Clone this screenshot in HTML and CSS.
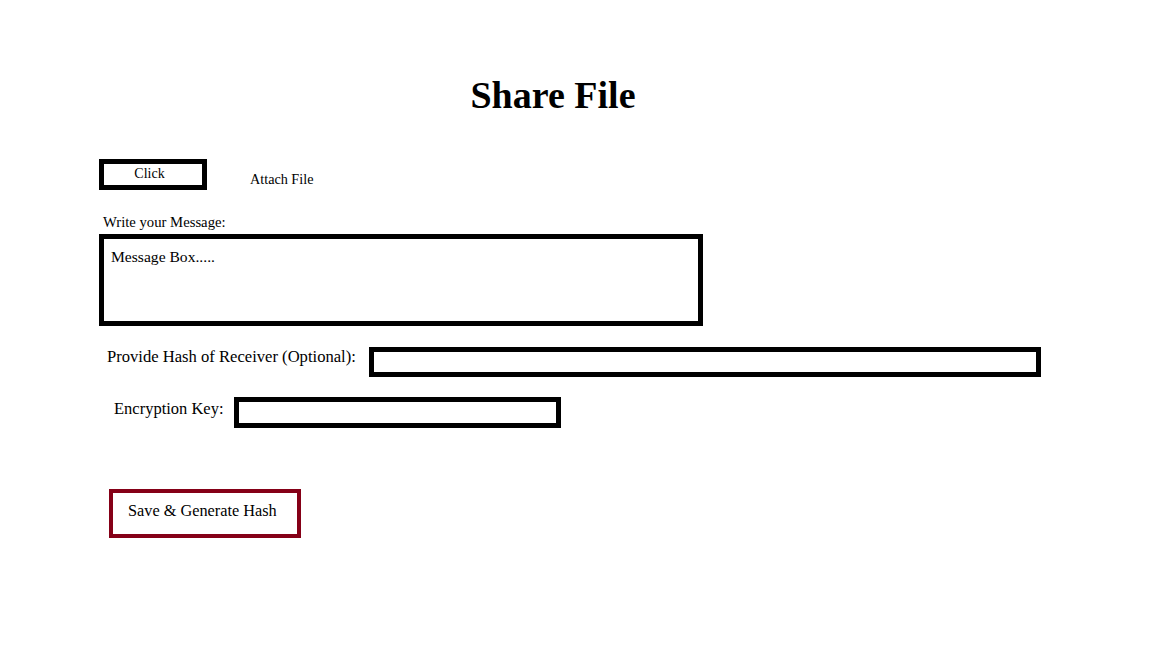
FILE: index.html
```html
<!DOCTYPE html>
<html lang="en">
<head>
<meta charset="utf-8">
<title>Share File</title>
<link rel="stylesheet" href="styles.css">
</head>
<body>
<main class="page">
  <h1 class="title">Share File</h1>
  <div class="form">
    <div class="attach-row">
      <div class="btn-click">Click</div>
      <span class="attach-label">Attach File</span>
    </div>
    <div class="msg-label">Write your Message:</div>
    <div class="msg-box">Message Box.....</div>
    <div class="field-row hash-row">
      <span class="field-label hash-label">Provide Hash of Receiver (Optional):</span>
      <div class="input hash-input"></div>
    </div>
    <div class="field-row key-row">
      <span class="field-label key-label">Encryption Key:</span>
      <div class="input key-input"></div>
    </div>
    <div class="btn-save">Save &amp; Generate Hash</div>
  </div>
</main>
</body>
</html>
```

FILE: styles.css
```css
* { box-sizing: border-box; }
html, body { margin: 0; padding: 0; background: #fff; }
body {
  font-family: "Liberation Serif", "Times New Roman", serif;
  color: #000;
  width: 1152px;
  height: 648px;
  overflow: hidden;
}
.page { display: flex; flex-direction: column; }
.title {
  margin: 73px 0 0 0;
  padding-right: 46px;
  text-align: center;
  font-size: 38px;
  line-height: 44px;
  font-weight: bold;
}
.form {
  display: flex;
  flex-direction: column;
  align-items: flex-start;
  padding-left: 99px;
  margin-top: 42px;
}
.attach-row {
  display: flex;
  align-items: flex-start;
  gap: 43px;
}
.btn-click {
  width: 108px;
  height: 31px;
  border: 5px solid #000;
  font-size: 14px;
  line-height: 18px;
  padding: 1px 7px 0 0;
  text-align: center;
}
.attach-label {
  font-size: 14.2px;
  line-height: 18px;
  padding-top: 11px;
}
.msg-label {
  margin: 23px 0 0 4px;
  font-size: 14.7px;
  line-height: 18px;
}
.msg-box {
  margin-top: 3px;
  width: 604px;
  height: 92px;
  border: 5px solid #000;
  padding: 9px 7px;
  font-size: 15.6px;
  line-height: 18px;
}
.field-row {
  display: flex;
  align-items: flex-start;
}
.field-label {
  font-size: 16.6px;
  line-height: 20px;
}
.input {
  height: 30px;
  border: 5px solid #000;
}
.hash-row { margin: 21px 0 0 8px; }
.hash-label { width: 262px; }
.hash-input { width: 672px; }
.key-row { margin: 20px 0 0 15px; }
.key-label { width: 120px; padding-top: 2px; font-size: 16.5px; }
.key-input { width: 327px; height: 31px; }
.btn-save {
  margin: 61px 0 0 10px;
  width: 192px;
  height: 49px;
  border: 4px solid #850017;
  padding: 8px 0 0 15px;
  font-size: 16.3px;
  line-height: 20px;
}
```
